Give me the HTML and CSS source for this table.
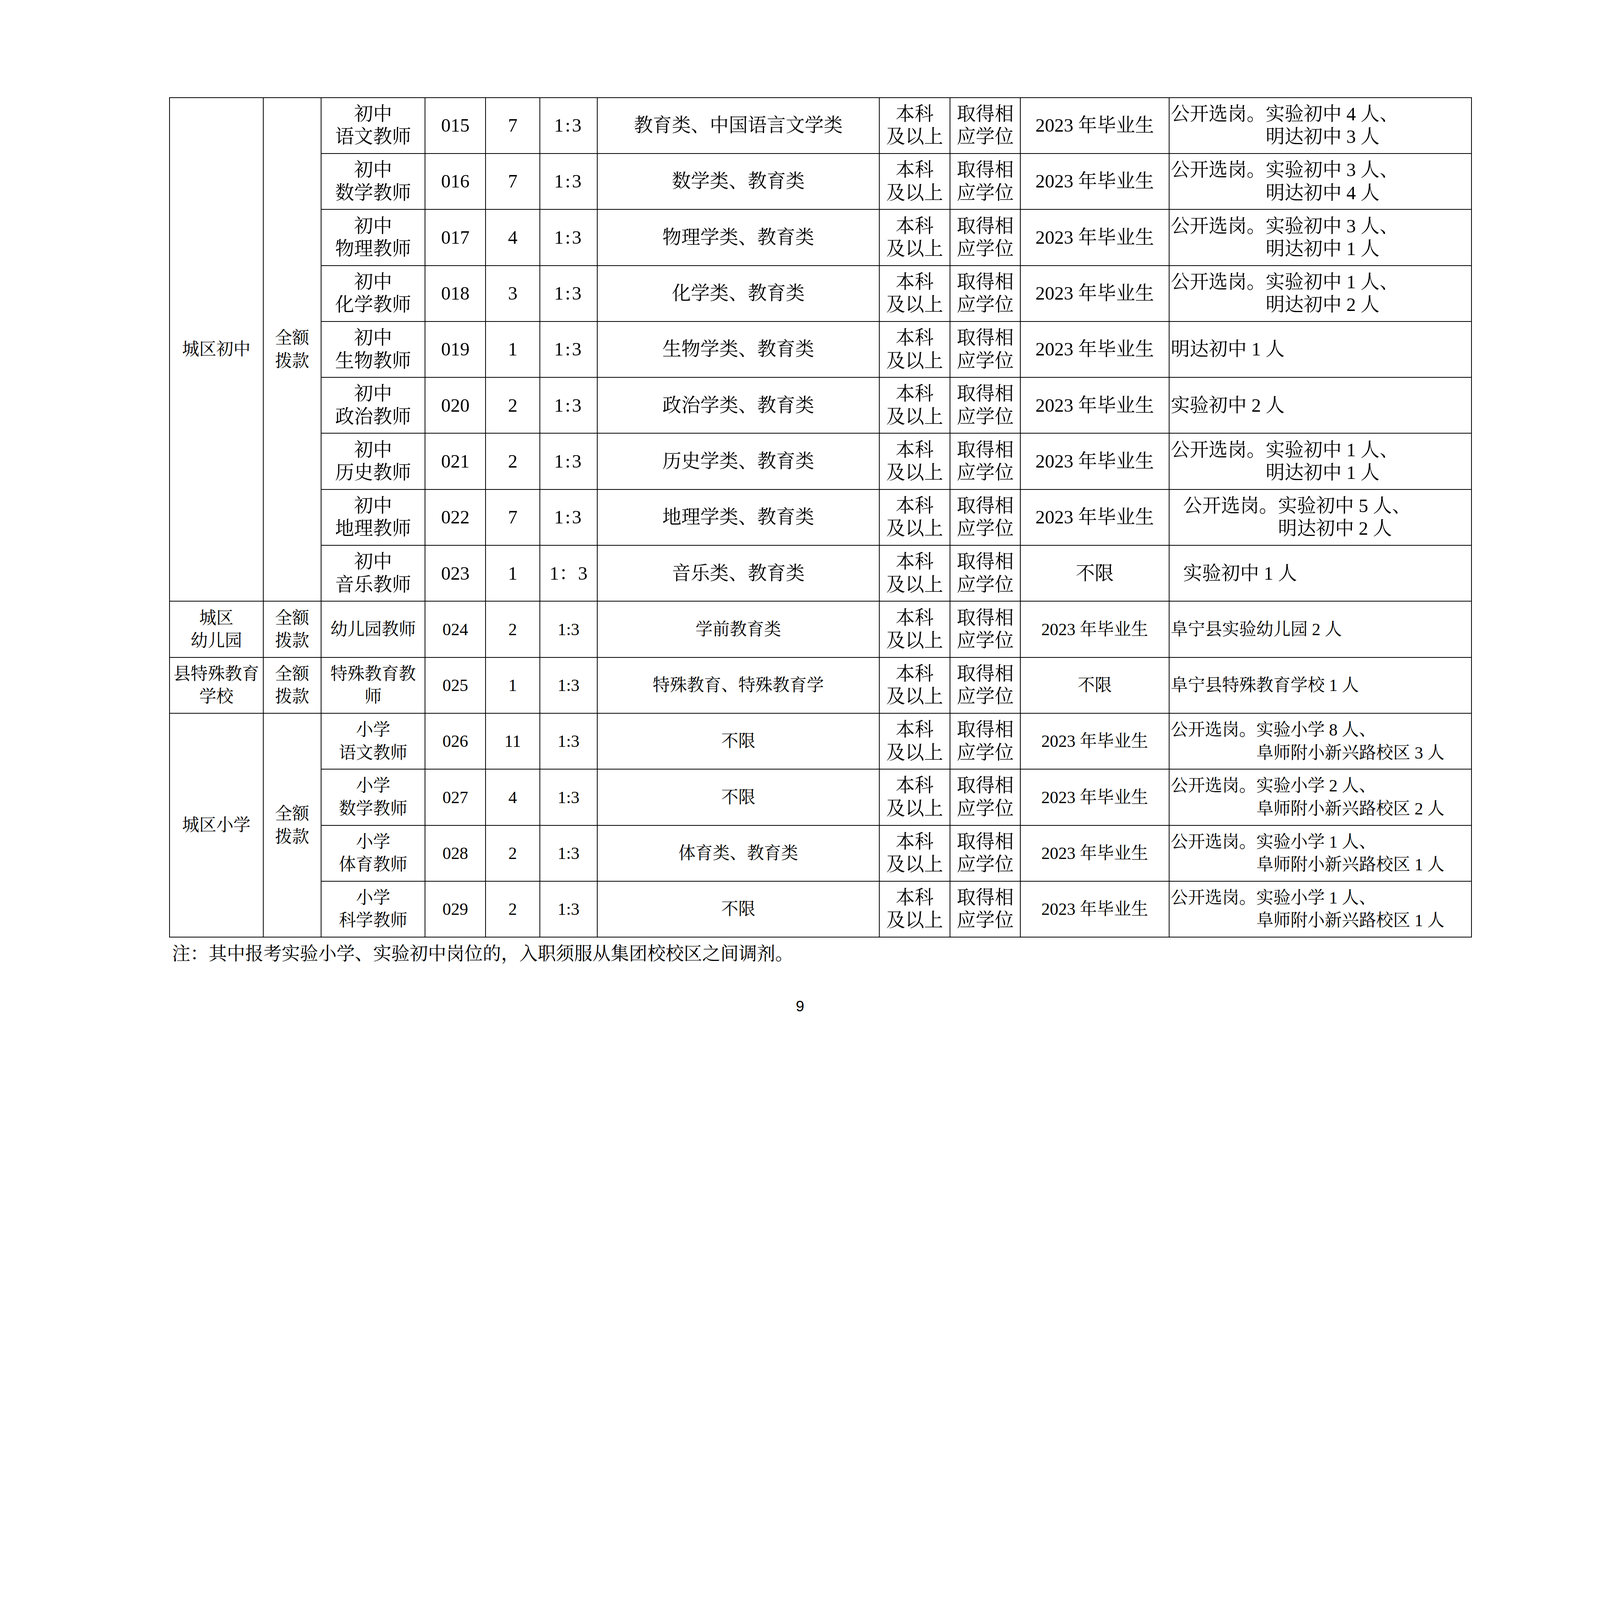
FILE: index.html
```html
<!DOCTYPE html>
<html lang="zh-CN">
<head>
<meta charset="utf-8">
<title>岗位表 第9页</title>
<link rel="stylesheet" href="styles.css">
</head>
<body>
<div class="page">
  <table class="posts">
    <colgroup>
      <col class="c1"><col class="c2"><col class="c3"><col class="c4"><col class="c5"><col class="c6">
      <col class="c7"><col class="c8"><col class="c9"><col class="c10"><col class="c11">
    </colgroup>
    <tbody>
      <tr>
        <td rowspan="9" class="sm">城区初中</td>
        <td rowspan="9" class="sm">全额<br>拨款</td>
        <td>初中<br>语文教师</td><td>015</td><td>7</td><td class="ratio">1:3</td>
        <td>教育类、中国语言文学类</td><td>本科<br>及以上</td><td>取得相<br>应学位</td><td>2023 年毕业生</td>
        <td class="note-cell"><div>公开选岗。实验初中 4 人、</div><div class="cont">明达初中 3 人</div></td>
      </tr>
      <tr>
        <td>初中<br>数学教师</td><td>016</td><td>7</td><td class="ratio">1:3</td>
        <td>数学类、教育类</td><td>本科<br>及以上</td><td>取得相<br>应学位</td><td>2023 年毕业生</td>
        <td class="note-cell"><div>公开选岗。实验初中 3 人、</div><div class="cont">明达初中 4 人</div></td>
      </tr>
      <tr>
        <td>初中<br>物理教师</td><td>017</td><td>4</td><td class="ratio">1:3</td>
        <td>物理学类、教育类</td><td>本科<br>及以上</td><td>取得相<br>应学位</td><td>2023 年毕业生</td>
        <td class="note-cell"><div>公开选岗。实验初中 3 人、</div><div class="cont">明达初中 1 人</div></td>
      </tr>
      <tr>
        <td>初中<br>化学教师</td><td>018</td><td>3</td><td class="ratio">1:3</td>
        <td>化学类、教育类</td><td>本科<br>及以上</td><td>取得相<br>应学位</td><td>2023 年毕业生</td>
        <td class="note-cell"><div>公开选岗。实验初中 1 人、</div><div class="cont">明达初中 2 人</div></td>
      </tr>
      <tr>
        <td>初中<br>生物教师</td><td>019</td><td>1</td><td class="ratio">1:3</td>
        <td>生物学类、教育类</td><td>本科<br>及以上</td><td>取得相<br>应学位</td><td>2023 年毕业生</td>
        <td class="note-cell"><div>明达初中 1 人</div></td>
      </tr>
      <tr>
        <td>初中<br>政治教师</td><td>020</td><td>2</td><td class="ratio">1:3</td>
        <td>政治学类、教育类</td><td>本科<br>及以上</td><td>取得相<br>应学位</td><td>2023 年毕业生</td>
        <td class="note-cell"><div>实验初中 2 人</div></td>
      </tr>
      <tr>
        <td>初中<br>历史教师</td><td>021</td><td>2</td><td class="ratio">1:3</td>
        <td>历史学类、教育类</td><td>本科<br>及以上</td><td>取得相<br>应学位</td><td>2023 年毕业生</td>
        <td class="note-cell"><div>公开选岗。实验初中 1 人、</div><div class="cont">明达初中 1 人</div></td>
      </tr>
      <tr>
        <td>初中<br>地理教师</td><td>022</td><td>7</td><td class="ratio">1:3</td>
        <td>地理学类、教育类</td><td>本科<br>及以上</td><td>取得相<br>应学位</td><td>2023 年毕业生</td>
        <td class="note-cell shift"><div>公开选岗。实验初中 5 人、</div><div class="cont">明达初中 2 人</div></td>
      </tr>
      <tr>
        <td>初中<br>音乐教师</td><td>023</td><td>1</td><td>1：3</td>
        <td>音乐类、教育类</td><td>本科<br>及以上</td><td>取得相<br>应学位</td><td>不限</td>
        <td class="note-cell shift"><div>实验初中 1 人</div></td>
      </tr>
      <tr class="sm">
        <td>城区<br>幼儿园</td>
        <td>全额<br>拨款</td>
        <td>幼儿园教师</td><td>024</td><td>2</td><td>1:3</td>
        <td>学前教育类</td><td class="lg">本科<br>及以上</td><td class="lg">取得相<br>应学位</td><td>2023 年毕业生</td>
        <td class="note-cell"><div>阜宁县实验幼儿园 2 人</div></td>
      </tr>
      <tr class="sm">
        <td>县特殊教育<br>学校</td>
        <td>全额<br>拨款</td>
        <td>特殊教育教<br>师</td><td>025</td><td>1</td><td>1:3</td>
        <td>特殊教育、特殊教育学</td><td class="lg">本科<br>及以上</td><td class="lg">取得相<br>应学位</td><td>不限</td>
        <td class="note-cell"><div>阜宁县特殊教育学校 1 人</div></td>
      </tr>
      <tr class="sm">
        <td rowspan="4">城区小学</td>
        <td rowspan="4">全额<br>拨款</td>
        <td>小学<br>语文教师</td><td>026</td><td>11</td><td>1:3</td>
        <td>不限</td><td class="lg">本科<br>及以上</td><td class="lg">取得相<br>应学位</td><td>2023 年毕业生</td>
        <td class="note-cell"><div>公开选岗。实验小学 8 人、</div><div class="cont">阜师附小新兴路校区 3 人</div></td>
      </tr>
      <tr class="sm">
        <td>小学<br>数学教师</td><td>027</td><td>4</td><td>1:3</td>
        <td>不限</td><td class="lg">本科<br>及以上</td><td class="lg">取得相<br>应学位</td><td>2023 年毕业生</td>
        <td class="note-cell"><div>公开选岗。实验小学 2 人、</div><div class="cont">阜师附小新兴路校区 2 人</div></td>
      </tr>
      <tr class="sm">
        <td>小学<br>体育教师</td><td>028</td><td>2</td><td>1:3</td>
        <td>体育类、教育类</td><td class="lg">本科<br>及以上</td><td class="lg">取得相<br>应学位</td><td>2023 年毕业生</td>
        <td class="note-cell"><div>公开选岗。实验小学 1 人、</div><div class="cont">阜师附小新兴路校区 1 人</div></td>
      </tr>
      <tr class="sm">
        <td>小学<br>科学教师</td><td>029</td><td>2</td><td>1:3</td>
        <td>不限</td><td class="lg">本科<br>及以上</td><td class="lg">取得相<br>应学位</td><td>2023 年毕业生</td>
        <td class="note-cell"><div>公开选岗。实验小学 1 人、</div><div class="cont">阜师附小新兴路校区 1 人</div></td>
      </tr>
    </tbody>
  </table>
  <p class="footnote">注：其中报考实验小学、实验初中岗位的，入职须服从集团校校区之间调剂。</p>
</div>
<div class="page-number">9</div>
</body>
</html>
```

FILE: styles.css
```css
html, body {
  margin: 0;
  padding: 0;
  background: #ffffff;
}

body {
  color: #000000;
  font-family: "Liberation Serif", "Noto Serif CJK SC", "Noto Sans CJK SC", serif;
  overflow: hidden;
}

.page {
  padding: 248.7px 0 0 433px;
}

.posts {
  border-collapse: collapse;
  table-layout: fixed;
  width: 3333.4px;
  font-size: 48.6px;
  line-height: 58.4px;
}

.c1 { width: 239.6px; }
.c2 { width: 148.4px; }
.c3 { width: 266.4px; }
.c4 { width: 154.5px; }
.c5 { width: 139.3px; }
.c6 { width: 146.6px; }
.c7 { width: 722.5px; }
.c8 { width: 180.6px; }
.c9 { width: 180.6px; }
.c10 { width: 380.1px; }
.c11 { width: 774.8px; }

.posts tr {
  height: 143.3px;
}

.posts td {
  border: 2.4px solid #000000;
  padding: 0 2.4px;
  text-align: center;
  vertical-align: middle;
  white-space: nowrap;
}

.posts td.sm,
.posts tr.sm td {
  font-size: 43.8px;
}

.posts tr.sm td.lg {
  font-size: 48.6px;
}

.posts td.ratio {
  letter-spacing: 0.08em;
}

.posts td.note-cell {
  text-align: left;
  padding-left: 3.6px;
}

.posts td.note-cell.shift {
  padding-left: 35.3px;
}

.note-cell .cont {
  padding-left: 5em;
}

.footnote {
  margin: 11.6px 0 0 0;
  padding-left: 7.3px;
  font-size: 46.8px;
  line-height: 58.4px;
}

.page-number {
  margin-top: 77.2px;
  text-align: center;
  font-family: "Liberation Sans", "Noto Sans", sans-serif;
  font-size: 38.9px;
  line-height: 58.4px;
}
```
